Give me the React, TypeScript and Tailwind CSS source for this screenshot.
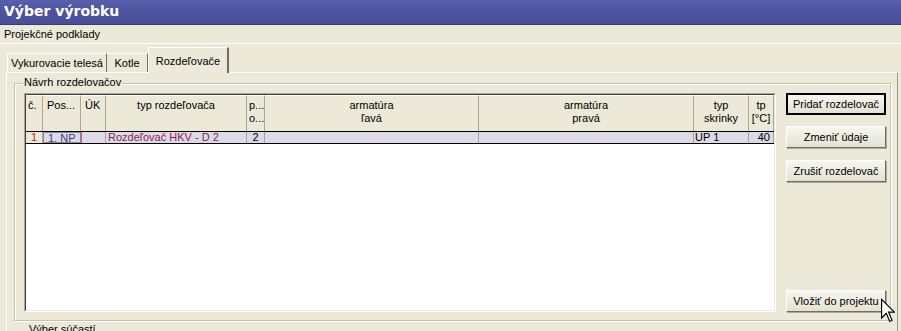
import React from "react";

const cols = [
    { w: "w-[17px]", h1: "č.", h2: "", align: "text-left pl-[2px]" },
    { w: "w-[38px]", h1: "Pos...", h2: "", align: "text-left pl-[4px]" },
    { w: "w-[25px]", h1: "ÚK", h2: "", align: "text-left pl-[4px]" },
    { w: "w-[141px]", h1: "typ rozdeľovača", h2: "", align: "text-center" },
    { w: "w-[18px]", h1: "p...", h2: "o...", align: "text-left pl-[2px]" },
    { w: "w-[214px]", h1: "armatúra", h2: "ľavá", align: "text-center" },
    { w: "w-[215px]", h1: "armatúra", h2: "pravá", align: "text-center" },
    { w: "w-[55px]", h1: "typ", h2: "skrinky", align: "text-center" },
    { w: "w-[25px]", h1: "tp", h2: "[°C]", align: "text-center" },
];

function Btn({ label, def = false }: { label: string; def?: boolean }) {
    return (
        <div
            className={
                "h-[22px] w-[100px] flex items-center justify-center bg-gradient-to-b from-[#f7f6ef] to-[#e4e1d3] " +
                (def
                    ? "border-2 border-black"
                    : "border border-t-white border-l-white border-r-[#716f64] border-b-[#716f64] shadow-[1px_1px_0_#aca899]")
            }
        >
            {label}
        </div>
    );
}

export default function App() {
    return (
        <div className="w-[901px] h-[331px] overflow-hidden bg-[#ece9d8] relative font-['Liberation_Sans',sans-serif] text-[11px] text-black flex flex-col">
            <div className="h-[25px] shrink-0 bg-gradient-to-b from-[#5860aa] via-[#4d539f] to-[#4a4f98] border-b border-[#383b74] pl-[4px] pt-[3px] text-white font-bold text-[14px] font-['DejaVu_Sans',sans-serif] leading-[17px]">
                Výber výrobku
            </div>
            <div className="h-[19px] shrink-0 pl-[4px] pt-[3px] leading-[13px] border-b border-white">
                Projekčné podklady
            </div>
            <div className="h-[28px] shrink-0 flex items-end pl-[7px]">
                <div className="h-[19px] w-[100px] border-t border-l border-white border-r border-r-[#716f64] flex items-center justify-center">
                    Vykurovacie telesá
                </div>
                <div className="h-[19px] w-[41px] border-t border-white border-r border-r-[#716f64] flex items-center justify-center">
                    Kotle
                </div>
                <div className="h-[26px] w-[81px] -mb-px z-10 bg-[#ece9d8] border-t border-l border-white border-r-2 border-r-[#716f64] flex items-start pt-[5px] justify-center">
                    Rozdeľovače
                </div>
            </div>
            <div className="ml-[6px] w-[892px] flex-1 border-l border-t border-white border-r border-r-[#919b9c] pl-[7px] pt-[10px]">
                <div className="relative w-[877px] h-[238px] border border-[#c5c2b2] shadow-[inset_1px_1px_0_#fff,1px_1px_0_#fff] pt-[9px] pl-[9px] pb-[7px] flex gap-[10px]">
                    <div className="absolute -top-[8px] left-[8px] bg-[#ece9d8] px-[1px] leading-[13px]">
                        Návrh rozdelovačov
                    </div>
                    <div className="w-[752px] h-[219px] border-l border-t border-[#aca899] border-r border-r-white border-b border-b-white">
                        <div className="w-full h-full border-l border-t border-[#404040] border-r border-r-[#ece9d8] border-b border-b-[#ece9d8] bg-white">
                            <div className="flex h-[36px] bg-[#ece9d8]">
                                {cols.map((c, i) => (
                                    <div
                                        key={i}
                                        className={`${c.w} ${c.align} shrink-0 border-r border-[#aca899] border-t border-t-white pt-[3px] leading-[13px] whitespace-nowrap overflow-hidden`}
                                    >
                                        <div>{c.h1}</div>
                                        <div>{c.h2}</div>
                                    </div>
                                ))}
                            </div>
                            <div className="flex h-[13px] border-t border-b border-black bg-[#dddae7] leading-[11px]">
                                <div className="w-[17px] shrink-0 bg-[#ece9d8] border-r border-[#aca899] text-[#b03030] text-center">
                                    1
                                </div>
                                <div className="w-[38px] shrink-0 border border-[#8a8a8a] text-[#3a3a90] pl-[4px]">
                                    1. NP
                                </div>
                                <div className="w-[25px] shrink-0 border-l border-l-[#d0508a] border-r border-[#aca899]"></div>
                                <div className="w-[141px] shrink-0 border-r border-[#aca899] text-[#8a1e50] pl-[2px] whitespace-nowrap">
                                    Rozdeľovač HKV - D 2
                                </div>
                                <div className="w-[18px] shrink-0 border-r border-[#aca899] text-center">
                                    2
                                </div>
                                <div className="w-[214px] shrink-0 border-r border-[#aca899]"></div>
                                <div className="w-[215px] shrink-0 border-r border-[#aca899]"></div>
                                <div className="w-[55px] shrink-0 border-r border-[#aca899] pl-[1px]">
                                    UP 1
                                </div>
                                <div className="w-[25px] shrink-0 border-r border-[#aca899] text-right pr-[3px]">
                                    40
                                </div>
                            </div>
                        </div>
                    </div>
                    <div className="flex flex-col gap-[5px] pb-[1px]">
                        <Btn label="Pridať rozdelovač" def />
                        <div className="h-[1px]" />
                        <Btn label="Zmeniť údaje" />
                        <div className="h-[2px]" />
                        <Btn label="Zrušiť rozdelovač" />
                        <div className="mt-auto">
                            <Btn label="Vložiť do projektu" />
                        </div>
                    </div>
                </div>
                <div className="pl-[15px] pt-[2px] leading-[13px]">Výber súčastí</div>
            </div>
            <svg
                className="absolute left-[881px] top-[298px]"
                width="14"
                height="26"
                viewBox="0 0 12 21"
            >
                <path
                    d="M0.5 0.5 L0.5 16.5 L4.5 12.5 L7.5 19.5 L9.5 18.5 L6.5 11.5 L11.5 11.5 Z"
                    fill="#fff"
                    stroke="#000"
                    strokeWidth="1"
                />
            </svg>
        </div>
    );
}
